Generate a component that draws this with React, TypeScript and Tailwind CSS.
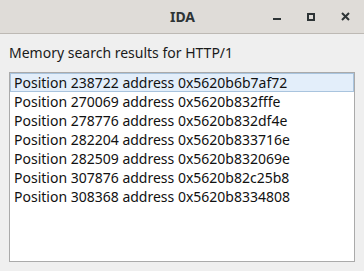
import React from "react";

const results: [string, string][] = [
    ["238722", "0x5620b6b7af72"],
    ["270069", "0x5620b832fffe"],
    ["278776", "0x5620b832df4e"],
    ["282204", "0x5620b833716e"],
    ["282509", "0x5620b832069e"],
    ["307876", "0x5620b82c25b8"],
    ["308368", "0x5620b8334808"],
];

const App: React.FC = () => {
    return (
        <div
            className="w-[364px] h-[271px] flex flex-col bg-[#efefef] text-[#2e3436] overflow-hidden"
            style={{ fontFamily: '"Noto Sans", "DejaVu Sans", sans-serif' }}
        >
            {/* title bar */}
            <div className="h-[34px] shrink-0 flex items-center bg-[#dfdcd8] border-b border-[#bdb9b4] relative">
                <div className="flex-1 text-center font-bold text-[14px] pl-[1px] pb-[1px]">IDA</div>
                <div className="absolute right-0 top-0 h-[33px] flex items-center">
                    <div className="w-[34px] flex justify-center">
                        <div className="w-[8px] h-[2px] bg-[#2e3436] mt-[5px]" />
                    </div>
                    <div className="w-[34px] flex justify-center">
                        <div className="w-[8px] h-[8px] border-2 border-[#2e3436]" />
                    </div>
                    <div className="w-[34px] flex justify-center mr-[2px]">
                        <svg width="9" height="9" viewBox="0 0 9 9">
                            <path d="M1 1 L8 8 M8 1 L1 8" stroke="#2e3436" strokeWidth="2" />
                        </svg>
                    </div>
                </div>
            </div>

            {/* content */}
            <div className="flex-1 flex flex-col px-[9px] pt-[9px] pb-[9px]">
                <div className="text-[14px] leading-[19px] h-[29px] text-[#1a1a1a]">
                    Memory search results for HTTP/1
                </div>
                <div className="flex-1 bg-white border border-[#aaaaaa] flex flex-col">
                    {results.map(([pos, addr], i) => (
                        <div
                            key={pos}
                            className={
                                i === 0
                                    ? "h-[19px] leading-[17px] text-[14px] pl-[3px] bg-[#e3eefa] border border-[#a9c4de] text-[#111]"
                                    : "h-[19px] leading-[19px] text-[14px] pl-[4px] text-[#111]"
                            }
                        >
                            Position {pos} address {addr}
                        </div>
                    ))}
                </div>
            </div>
        </div>
    );
};

export default App;
